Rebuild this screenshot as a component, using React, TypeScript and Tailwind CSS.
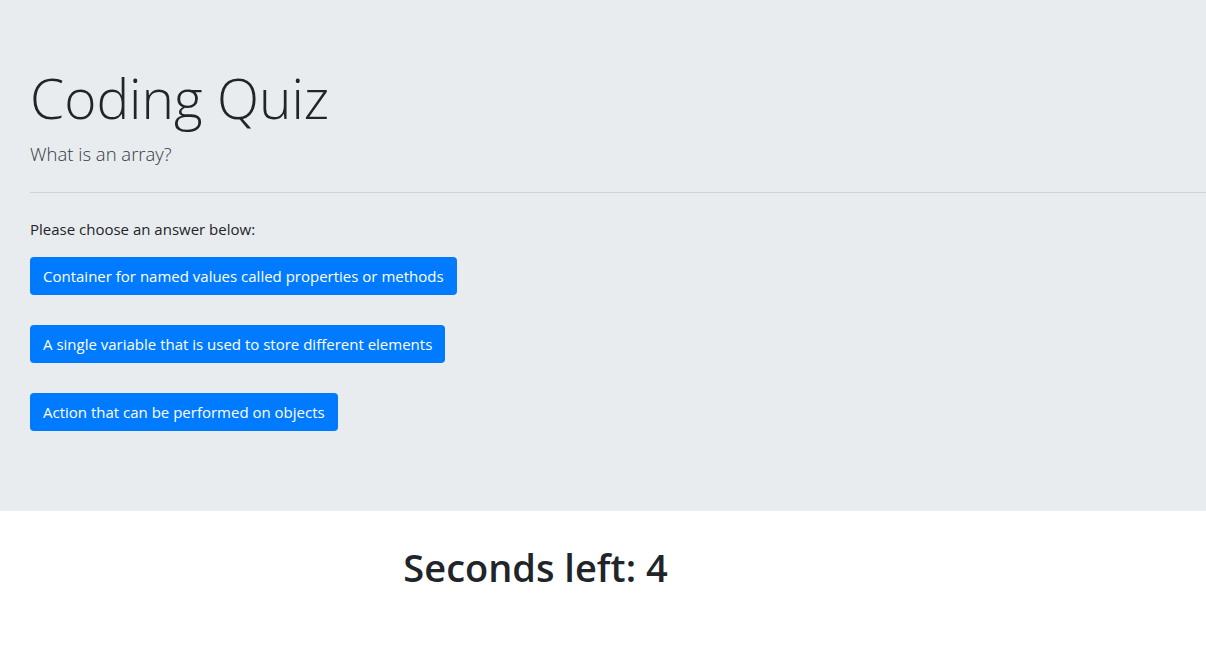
import React from 'react';

const answers = [
  'Container for named values called properties or methods',
  'A single variable that is used to store different elements',
  'Action that can be performed on objects',
];

const App: React.FC = () => {
  return (
    <div className="min-h-screen bg-white text-[#212529]" style={{ fontFamily: '"Open Sans", "Liberation Sans", sans-serif' }}>
      <div className="bg-[#e9ecef] px-[30px] pt-[64px] pb-[80px]">
        <h1 className="text-[55px] font-light leading-[67px] mb-2">Coding Quiz</h1>
        <p className="text-[18.5px] font-light leading-[30px] text-[#343a40]">What is an array?</p>
        <hr className="mt-[23px] mb-[24px] -mr-[30px] border-0 border-t border-black/10" />
        <p className="text-[15px] leading-6 mb-4">Please choose an answer below:</p>
        <div className="flex flex-col items-start gap-[30px]">
          {answers.map((a) => (
            <button
              key={a}
              className="bg-[#007bff] text-white text-[15px] leading-6 px-[13px] py-[7px] rounded"
            >
              {a}
            </button>
          ))}
        </div>
      </div>
      <div className="w-[1071px] text-center pt-[34px]">
        <h2 className="text-[38px] font-semibold leading-[44px]">Seconds left: 4</h2>
      </div>
    </div>
  );
};

export default App;
